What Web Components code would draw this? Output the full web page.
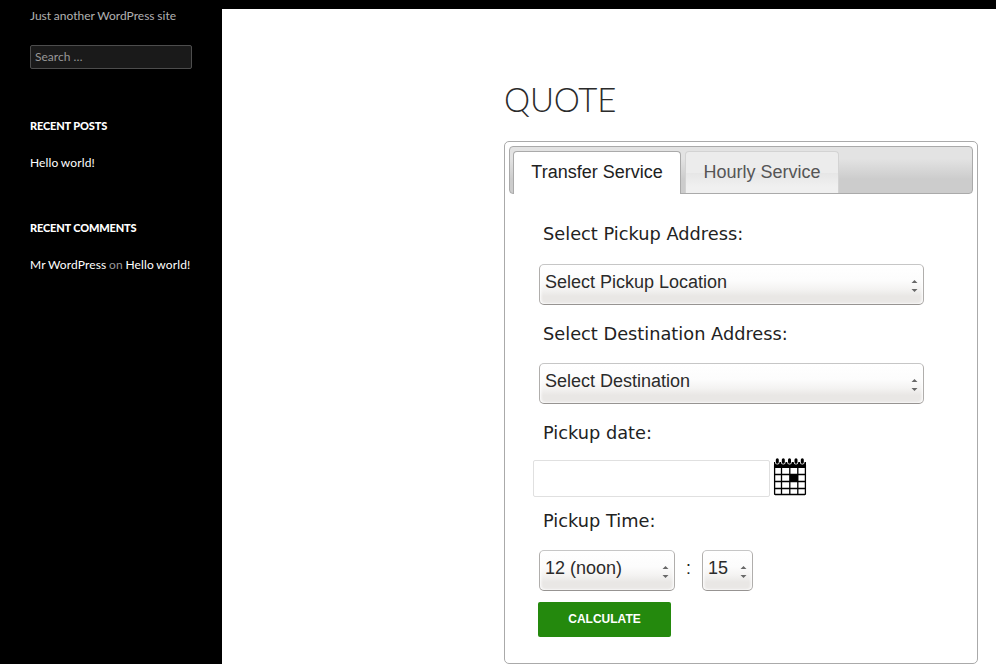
<!DOCTYPE html>
<html lang="en">
<head>
<meta charset="utf-8">
<title>Quote</title>
<style>
html,body{margin:0;height:100%;overflow:hidden;background:#fff}
</style>
</head>
<body>
<quote-page></quote-page>
<script>
const define = (name, html) => {
  const t = document.createElement('template');
  t.innerHTML = html;
  customElements.define(name, class extends HTMLElement {
    constructor() {
      super();
      this.attachShadow({mode: 'open'}).append(t.content.cloneNode(true));
    }
  });
};

define('side-widget', `
<style>
:host{display:block;height:102px;font:12px/18px Lato,sans-serif;color:#fff;letter-spacing:.14px;word-spacing:-.6px}
h2{margin:0 0 19px;font:900 11px/18px Lato,sans-serif;text-transform:uppercase;color:#fff;letter-spacing:-.15px;word-spacing:0}
</style>
<h2><slot name="title"></slot></h2><div><slot></slot></div>`);

define('side-bar', `
<style>
:host{display:block;box-sizing:border-box;width:222px;height:664px;background:#000;padding:7px 30px 0;font:12px/18px Lato,sans-serif;color:rgba(255,255,255,.7)}
.tag{word-spacing:-.3px}
.search{box-sizing:border-box;width:162px;height:24px;margin:20px 0 48px;padding:2px 4px;border:1px solid #4d4d4d;border-radius:2px;background:#1a1a1a;color:#989898;line-height:18px}
.on{color:#989898}
.c{white-space:nowrap}
</style>
<div class="tag">Just another WordPress site</div>
<div class="search">Search …</div>
<side-widget><span slot="title">Recent Posts</span>Hello world!</side-widget>
<side-widget><span slot="title">Recent Comments</span><span class="c">Mr WordPress <span class="on">on</span> Hello world!</span></side-widget>`);

define('select-box', `
<style>
:host{display:flex;box-sizing:border-box;height:41px;justify-content:space-between;padding:5px 5px 0;border:1px solid #a9a6a3;border-color:#c6c6c6 #b0aeac #979492 #b0aeac;border-radius:5px;background:linear-gradient(#fff 0,#fcfcfc 40%,#f4f3f2 62%,#e9e7e5 80%,#e9e7e5 100%);box-shadow:inset 2px 0 3px -1px #fff,inset -2px 0 3px -1px #fff,inset 0 -2px 2px -1px #f4f3f2;font:18px/24px "Liberation Sans",sans-serif;color:#2b2b2b}
svg{margin-top:9px;flex:none}
</style>
<span><slot></slot></span>
<svg width="7" height="14" viewBox="0 0 7 14"><path d="M.5 4 3.5 1l3 3zM.5 10h6l-3 3z" fill="#686868"/></svg>`);

define('field-label', `
<style>:host{display:block;height:24px;padding-left:4px;font:17.78px/24px "DejaVu Sans",sans-serif;color:#222}</style><slot></slot>`);

define('service-tab', `
<style>
:host{display:block;box-sizing:border-box;height:42px;border:1px solid #d3d3d3;border-bottom:0;border-radius:4px 4px 0 0;background:linear-gradient(#ececec 0 50%,#e6e6e6 51%,#f0f0f0 85%);color:#555;text-align:center;font:18px/40px "Liberation Sans",sans-serif}
:host([active]){height:43px;background:#fff;border-color:#aaa;color:#212121}
</style><slot></slot>`);

define('calendar-icon', `
<style>:host{display:block;width:34px;height:40px}svg{display:block}</style>
<svg width="34" height="40" viewBox="0 0 34 40">
<path fill="#fff" d="M1 5h32v33H1z"/>
<path fill="#000" d="M1 5h32v6H1zM17 17h8v7h-8z"/>
<path fill="none" stroke="#000" stroke-width="1.3" d="M1.6 8v29q0 .5.5.5h29.8q.5 0 .5-.5V8M1 17.5h32M1 24.5h32M1 31.5h32M8.5 10v27M16.8 10v27M24.8 10v27"/>
<path stroke="#fff" stroke-width="4.6" stroke-linecap="round" d="M4.3 2v3.2M10.3 2v3.2M16.5 2v3.2M23 2v3.2M29.3 2v3.2"/>
<path stroke="#000" stroke-width="3" stroke-linecap="round" d="M4.3 2.8v2.4M10.3 2.8v2.4M16.5 2.8v2.4M23 2.8v2.4M29.3 2.8v2.4"/>
</svg>`);

define('quote-panel', `
<style>
:host{display:block;box-sizing:border-box;width:474px;height:523px;padding:4px;border:1px solid #aaa;border-radius:5px}
.tabs{display:flex;gap:4px;box-sizing:border-box;height:48px;padding:4px 3px 0;border:1px solid #aaa;border-radius:4px;background:linear-gradient(#e3e3e3 0 25%,#ccc 70%)}
.a{width:168px}.b{width:154px}
.form{padding:28px 49px 0 30px}
.sel1{margin:18px 0 17px}
.sel2{margin:17px 0}
.date{display:flex;margin:12px 0 12px -6px;height:40px}
.input{box-sizing:border-box;width:237px;height:37px;margin:3px 3px 0 0;border:1px solid #e0e0e0;border-radius:2px}
.time{display:flex;margin:17px 0 11px}
.hour{width:136px}.min{width:51px}
.colon{width:27px;text-align:center;font:17.6px/36px "Liberation Sans",sans-serif;color:#222}
.btn{width:133px;height:35px;margin-left:-1px;border-radius:2px;background:#24890d;color:#fff;text-align:center;font:bold 12px/34px "Liberation Sans",sans-serif}
</style>
<div class="tabs"><service-tab active class="a">Transfer Service</service-tab><service-tab class="b">Hourly Service</service-tab></div>
<div class="form">
<field-label>Select Pickup Address:</field-label>
<select-box class="sel1">Select Pickup Location</select-box>
<field-label>Select Destination Address:</field-label>
<select-box class="sel2">Select Destination</select-box>
<field-label>Pickup date:</field-label>
<div class="date"><div class="input"></div><calendar-icon></calendar-icon></div>
<field-label>Pickup Time:</field-label>
<div class="time"><select-box class="hour">12 (noon)</select-box><span class="colon">:</span><select-box class="min">15</select-box></div>
<div class="btn">CALCULATE</div>
</div>`);

define('quote-page', `
<style>
:host{display:flex;width:996px;height:664px;background:#fff}
main{box-sizing:border-box;width:774px;border-top:9px solid #000;padding:71px 0 0 282px}
h1{margin:0 0 23px;height:38px;font:300 33px/38px Lato,sans-serif;letter-spacing:-.2px;color:#2b2b2b}
</style>
<side-bar></side-bar>
<main><h1>QUOTE</h1><quote-panel></quote-panel></main>`);
</script>
</body>
</html>
